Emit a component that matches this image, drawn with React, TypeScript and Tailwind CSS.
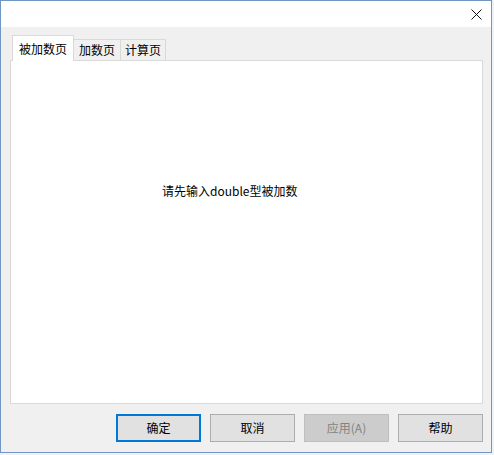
import React from "react";

const font = { fontFamily: '"Noto Sans CJK SC", "Noto Sans", sans-serif' };

function Btn({ label, kind }: { label: string; kind?: "default" | "disabled" }) {
  let cls = "w-[85px] h-[28px] flex items-center justify-center text-[12px] ";
  if (kind === "default") cls += "border-2 border-[#0078d7] bg-[#e1e1e1] text-black";
  else if (kind === "disabled") cls += "border border-[#bfbfbf] bg-[#cccccc] text-[#838383]";
  else cls += "border border-[#adadad] bg-[#e1e1e1] text-black";
  return <div className={cls}>{label}</div>;
}

export default function App() {
  return (
    <div className="w-[494px] h-[455px] bg-[#eef3f8] overflow-hidden" style={font}>
      <div className="w-[492px] h-[453px] border border-[#7097c4] bg-[#f0f0f0] flex flex-col">
        <div className="h-[26px] bg-white flex items-center justify-end pr-[9px]">
          <svg width="11" height="11" viewBox="0 0 11 11">
            <path d="M0.5 0.5 L10.5 10.5 M10.5 0.5 L0.5 10.5" stroke="#111" strokeWidth="1" fill="none" />
          </svg>
        </div>
        <div className="flex flex-col pl-[9px] pr-[8px] pt-[8px]">
          <div className="flex items-end h-[25px] pl-[2px] relative z-10">
            <div className="w-[62px] h-[26px] -mb-px bg-white border border-[#d9d9d9] border-b-0 flex items-center justify-center text-[12px] text-black">
              被加数页
            </div>
            <div className="w-[47px] h-[21px] bg-[#f0f0f0] border border-[#d9d9d9] border-l-0 border-b-0 flex items-center justify-center text-[12px] text-black">
              加数页
            </div>
            <div className="w-[45px] h-[21px] bg-[#f0f0f0] border border-[#d9d9d9] border-l-0 border-b-0 flex items-center justify-center text-[12px] text-black">
              计算页
            </div>
          </div>
          <div className="w-[473px] h-[344px] bg-white border border-[#d9d9d9] pt-[121px] pl-[151px] text-[12px] text-black">
            请先输入double型被加数
          </div>
          <div className="flex justify-end gap-[9px] mt-[10px]">
            <Btn label="确定" kind="default" />
            <Btn label="取消" />
            <Btn label="应用(A)" kind="disabled" />
            <Btn label="帮助" />
          </div>
        </div>
      </div>
    </div>
  );
}
